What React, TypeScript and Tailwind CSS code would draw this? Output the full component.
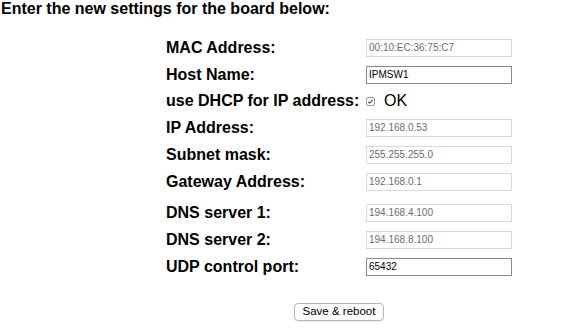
import React from "react";

// ─── Form data ─────────────────────────────────────────
type Field = { label: string; value: string; readOnly: boolean; gapBefore?: boolean };

const fields: Field[] = [
  { label: "MAC Address:", value: "00:10:EC:36:75:C7", readOnly: true },
  { label: "Host Name:", value: "IPMSW1", readOnly: false },
];

const netFields: Field[] = [
  { label: "IP Address:", value: "192.168.0.53", readOnly: true },
  { label: "Subnet mask:", value: "255.255.255.0", readOnly: true },
  { label: "Gateway Address:", value: "192.168.0.1", readOnly: true },
  { label: "DNS server 1:", value: "194.168.4.100", readOnly: true, gapBefore: true },
  { label: "DNS server 2:", value: "194.168.8.100", readOnly: true },
  { label: "UDP control port:", value: "65432", readOnly: false },
];

function Row({ field }: { field: Field }) {
  return (
    <div className={`flex items-center h-[27px] ${field.gapBefore ? "mt-[4px]" : ""}`}>
      <div className="w-[200px] text-[16px] font-bold text-black">{field.label}</div>
      <input
        readOnly
        value={field.value}
        className={
          field.readOnly
            ? "w-[146px] h-[18px] border border-[#d9d9d9] px-[2px] text-[10px] text-[#6d6d6d] outline-none bg-white"
            : "w-[146px] h-[18px] border border-[#8a8a8a] px-[2px] text-[10px] text-black outline-none bg-white"
        }
        style={{ fontFamily: '"Liberation Sans", Arial, sans-serif' }}
      />
    </div>
  );
}

export default function App() {
  return (
    <div
      className="w-[568px] h-[332px] bg-white text-black overflow-hidden"
      style={{ fontFamily: '"Liberation Sans", Arial, sans-serif' }}
    >
      <h1 className="text-[16px] leading-[18px] font-bold pl-[1px]">Enter the new settings for the board below:</h1>

      <div className="ml-[166px] w-[346px] mt-[16px]">
        {fields.map((f) => (
          <Row key={f.label} field={f} />
        ))}

        {/* DHCP */}
        <div className="flex items-center h-[26px]">
          <div className="w-[200px] text-[16px] font-bold">use DHCP for IP address:</div>
          <span className="w-[9px] h-[9px] rounded-[2px] border border-[#9a9a9a] flex items-center justify-center">
            <svg width="7" height="7" viewBox="0 0 7 7">
              <path d="M1.2 3.6 L2.8 5.2 L5.8 1.6" fill="none" stroke="#555" strokeWidth="1.1" />
            </svg>
          </span>
          <span className="ml-[9px] text-[16px]">OK</span>
        </div>

        {netFields.map((f) => (
          <Row key={f.label} field={f} />
        ))}

        <div className="flex justify-center mt-[23px]">
          <button className="h-[18px] px-[8px] rounded-[4px] border border-[#b5b5b5] bg-white text-[11.5px] leading-none text-black shadow-[0_1px_0_rgba(0,0,0,0.05)]">
            Save &amp; reboot
          </button>
        </div>
      </div>
    </div>
  );
}
